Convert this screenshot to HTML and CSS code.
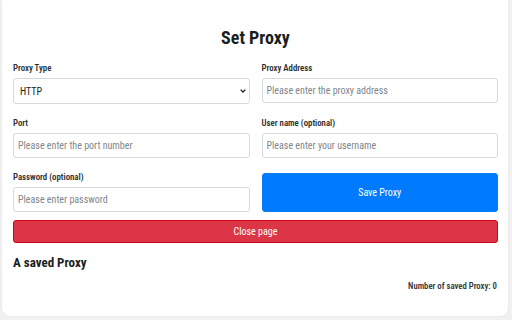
FILE: index.html
```html
<!DOCTYPE html>
<html lang="en">
<head>
<meta charset="utf-8">
<title>Set Proxy</title>
<link rel="stylesheet" href="styles.css">
</head>
<body>
<main class="card">
  <h1 class="title">Set Proxy</h1>
  <form class="form-grid">
    <div class="field">
      <label class="label" for="type">Proxy Type</label>
      <select class="control select" id="type">
        <option>HTTP</option>
        <option>HTTPS</option>
        <option>SOCKS5</option>
      </select>
    </div>
    <div class="field">
      <label class="label" for="addr">Proxy Address</label>
      <input class="control" id="addr" type="text" placeholder="Please enter the proxy address">
    </div>
    <div class="field">
      <label class="label" for="port">Port</label>
      <input class="control" id="port" type="text" placeholder="Please enter the port number">
    </div>
    <div class="field">
      <label class="label" for="user">User name (optional)</label>
      <input class="control" id="user" type="text" placeholder="Please enter your username">
    </div>
    <div class="field">
      <label class="label" for="pass">Password (optional)</label>
      <input class="control" id="pass" type="password" placeholder="Please enter password">
    </div>
    <button class="btn btn-save" type="button">Save Proxy</button>
  </form>
  <button class="btn btn-close" type="button">Close page</button>
  <h2 class="subtitle">A saved Proxy</h2>
  <p class="count">Number of saved Proxy: 0</p>
</main>
</body>
</html>
```

FILE: styles.css
```css
* { box-sizing: border-box; }

html, body { height: 100%; }

body {
  margin: 0;
  padding: 0 4px 4px 2px;
  background: #f1f1f1;
  display: flex;
  flex-direction: column;
  font-family: Roboto, "Liberation Sans", Arial, sans-serif;
  font-stretch: 82%;
  color: #212529;
}

.card {
  flex: 1;
  background: #ffffff;
  border-radius: 0 0 8px 8px;
  box-shadow: 0 0 2px rgba(0, 0, 0, 0.08);
  padding: 27px 10px 0 11px;
}

.title {
  margin: 0;
  text-align: center;
  font-size: 18px;
  line-height: 22px;
  font-weight: bold;
  color: #1b1e21;
}

.form-grid {
  margin: 14px 0 0;
  display: grid;
  grid-template-columns: 1fr 1fr;
  column-gap: 12px;
  row-gap: 14px;
}

.field {
  display: flex;
  flex-direction: column;
}

.label {
  display: block;
  font-size: 8.8px;
  line-height: 10px;
  font-weight: 600;
  margin-bottom: 5px;
  color: #2b2f33;
}

.control {
  height: 25px;
  width: 100%;
  border: 1px solid #d6dade;
  border-radius: 3px;
  padding: 0 4px;
  font-family: inherit;
  font-stretch: 82%;
  font-size: 10px;
  color: #495057;
  background: #fff;
  outline: none;
}

.control::placeholder {
  color: #80868c;
}

.select {
  height: 26px;
  padding: 0 6px;
  -webkit-appearance: none;
  appearance: none;
  color: #212529;
  background-image: url("data:image/svg+xml,%3Csvg xmlns='http://www.w3.org/2000/svg' width='6' height='4' viewBox='0 0 6 4'%3E%3Cpath d='M0.6 0.6 L3 3 L5.4 0.6' fill='none' stroke='%23222' stroke-width='1.3'/%3E%3C/svg%3E");
  background-repeat: no-repeat;
  background-position: right 3px center;
  background-size: 6px 4px;
}

.btn {
  display: block;
  width: 100%;
  font-family: inherit;
  font-stretch: 82%;
  font-size: 10px;
  color: #fff;
  cursor: pointer;
  padding: 0;
}

.btn-save {
  align-self: end;
  height: 39px;
  background: #007bff;
  border: 1px solid #0a7cf5;
  border-radius: 3px;
}

.btn-close {
  margin-top: 8px;
  height: 23px;
  background: #dc3545;
  border: 1px solid #d0021b;
  border-radius: 3px;
}

.subtitle {
  margin: 12px 0 0;
  font-size: 13px;
  line-height: 16px;
  font-weight: bold;
  color: #1b1e21;
}

.count {
  margin: 10px 1px 0 0;
  text-align: right;
  font-size: 8.7px;
  line-height: 11px;
  font-weight: 600;
  color: #343a40;
}
```
